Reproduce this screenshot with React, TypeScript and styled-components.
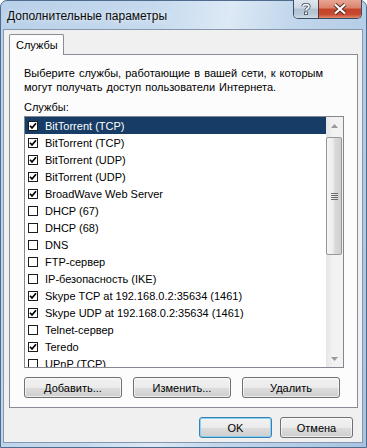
import styled, { createGlobalStyle } from "styled-components";

const GlobalStyle = createGlobalStyle`
  html, body {
    margin: 0;
    padding: 0;
    background: #ffffff;
  }
  body {
    font-family: "Liberation Sans", Arial, sans-serif;
    font-size: 11px;
    color: #000;
  }
`;

const Window = styled.div`
  width: 367px;
  height: 448px;
  box-sizing: border-box;
  border: 1px solid #4f6c8f;
  border-radius: 7px 7px 0 0;
  padding: 0 3px 4px 2px;
  display: flex;
  flex-direction: column;
  background: linear-gradient(
    100deg,
    #b8d0e9 0%,
    #c6daee 35%,
    #dde9f5 52%,
    #c2d7ec 66%,
    #a8c3e1 100%
  );
`;

const TitleBar = styled.div`
  height: 28px;
  flex: none;
  display: flex;
  justify-content: space-between;
  align-items: flex-start;
`;

const Title = styled.div`
  font-family: "Liberation Sans", Arial, sans-serif;
  font-size: 12px;
  line-height: 12px;
  padding: 9px 0 0 4px;
  color: #0b0b0b;
  text-shadow: 0 0 6px rgba(255, 255, 255, 0.9);
`;

const CaptionButtons = styled.div`
  display: flex;
  margin-right: 1px;
  margin-top: -1px;
  border: 1px solid #3a4d66;
  border-top: none;
  border-radius: 0 0 5px 5px;
  overflow: hidden;
`;

const CaptionButton = styled.div<{ $close?: boolean }>`
  width: ${(p) => (p.$close ? 42 : 24)}px;
  height: 18px;
  display: flex;
  align-items: center;
  justify-content: center;
  border-left: ${(p) => (p.$close ? "1px solid #5a3a3a" : "none")};
  background: ${(p) =>
    p.$close
      ? "linear-gradient(180deg, #e9a594 0%, #d9826b 45%, #c4432a 50%, #c84a30 80%, #e08a6c 100%)"
      : "linear-gradient(180deg, #dfe7ef 0%, #ccd8e4 45%, #b2c2d3 50%, #b9c9d8 80%, #d0dde8 100%)"};
`;

const Client = styled.div`
  flex: 1;
  box-sizing: border-box;
  border: 1px solid #8497ad;
  background: #f0f0f0;
  padding: 4px 4px 0 5px;
  display: flex;
  flex-direction: column;
`;

const TabStrip = styled.div`
  display: flex;
  height: 20px;
  position: relative;
  z-index: 1;
`;

const Tab = styled.div`
  width: 55px;
  height: 21px;
  box-sizing: border-box;
  border: 1px solid #898c95;
  border-bottom: none;
  border-radius: 2px 2px 0 0;
  background: #fcfcfc;
  padding: 4px 0 0 6px;
  line-height: 13px;
`;

const Panel = styled.div`
  height: 354px;
  box-sizing: border-box;
  border: 1px solid #898c95;
  background: #fcfcfc;
  padding: 11px 13px 0 14px;
  display: flex;
  flex-direction: column;
`;

const Intro = styled.div`
  line-height: 14px;
  word-spacing: 1px;
`;

const ListLabel = styled.div`
  line-height: 14px;
  margin-top: 6px;
`;

const ListBox = styled.div`
  margin-top: 2px;
  height: 252px;
  box-sizing: border-box;
  border: 1px solid #828790;
  background: #fff;
  display: flex;
  overflow: hidden;
`;

const Rows = styled.div`
  flex: 1;
  overflow: hidden;
`;

const Row = styled.div<{ $selected?: boolean }>`
  height: 17px;
  display: flex;
  align-items: center;
  padding-left: 3px;
  gap: 7px;
  white-space: nowrap;
  background: ${(p) => (p.$selected ? "#173d66" : "transparent")};
  color: ${(p) => (p.$selected ? "#fff" : "#000")};
`;

const Check = styled.div`
  width: 10px;
  height: 10px;
  box-sizing: border-box;
  border: 1px solid #1c1c1c;
  background: #fff;
  flex: none;
  display: flex;
  align-items: center;
  justify-content: center;
`;

const ScrollBar = styled.div`
  width: 17px;
  flex: none;
  display: flex;
  flex-direction: column;
  background: linear-gradient(90deg, #e6e6e6 0%, #f2f2f2 40%, #f2f2f2 100%);
`;

const ArrowButton = styled.div`
  height: 17px;
  display: flex;
  align-items: center;
  justify-content: center;
  flex: none;
`;

const Track = styled.div`
  flex: 1;
  padding: 3px 0 0 0;
`;

const Thumb = styled.div`
  height: 118px;
  box-sizing: border-box;
  border: 1px solid #979797;
  border-radius: 2px;
  margin-right: 1px;
  background: linear-gradient(90deg, #f4f4f4 0%, #ececec 45%, #dadada 55%, #d0d0d0 100%);
  display: flex;
  align-items: center;
  justify-content: center;
`;

const ButtonRow = styled.div<{ $end?: boolean }>`
  display: flex;
  gap: ${(p) => (p.$end ? 8 : 11)}px;
  justify-content: ${(p) => (p.$end ? "flex-end" : "flex-start")};
  margin-top: 9px;
  padding-right: ${(p) => (p.$end ? 5 : 0)}px;
`;

const Button = styled.div<{ $width: number; $default?: boolean }>`
  width: ${(p) => p.$width}px;
  height: 21px;
  box-sizing: border-box;
  border: 1px solid ${(p) => (p.$default ? "#3c7fb1" : "#707070")};
  border-radius: 3px;
  display: flex;
  align-items: center;
  justify-content: center;
  background: linear-gradient(180deg, #f2f2f2 0%, #ebebeb 50%, #dddddd 51%, #cfcfcf 100%);
  box-shadow: inset 0 0 0 1px
    ${(p) => (p.$default ? "rgba(120, 210, 245, 0.9)" : "rgba(255, 255, 255, 0.6)")};
`;

const services = [
  { name: "BitTorrent (TCP)", on: true },
  { name: "BitTorrent (TCP)", on: true },
  { name: "BitTorrent (UDP)", on: true },
  { name: "BitTorrent (UDP)", on: true },
  { name: "BroadWave Web Server", on: true },
  { name: "DHCP (67)", on: false },
  { name: "DHCP (68)", on: false },
  { name: "DNS", on: false },
  { name: "FTP-сервер", on: false },
  { name: "IP-безопасность (IKE)", on: false },
  { name: "Skype TCP at 192.168.0.2:35634 (1461)", on: true },
  { name: "Skype UDP at 192.168.0.2:35634 (1461)", on: true },
  { name: "Telnet-сервер", on: false },
  { name: "Teredo", on: true },
  { name: "UPnP (TCP)", on: false },
];

function CheckMark() {
  return (
    <svg width="8" height="8" viewBox="0 0 8 8">
      <path d="M1 3.8 L3 6 L7 1.2" fill="none" stroke="#000" strokeWidth="1.7" />
    </svg>
  );
}

function App() {
  return (
    <>
      <GlobalStyle />
      <Window>
        <TitleBar>
          <Title>Дополнительные параметры</Title>
          <CaptionButtons>
            <CaptionButton>
              <svg width="10" height="12" viewBox="0 0 10 12">
                <path
                  d="M2 3.5 C2 1 8 1 8 3.5 C8 5.5 5 5.5 5 7.5"
                  fill="none"
                  stroke="#3b4a5c"
                  strokeWidth="3.2"
                />
                <path
                  d="M2 3.5 C2 1 8 1 8 3.5 C8 5.5 5 5.5 5 7.5"
                  fill="none"
                  stroke="#fff"
                  strokeWidth="1.6"
                />
                <rect x="3.5" y="9" width="3" height="2.6" fill="#fff" stroke="#3b4a5c" strokeWidth="0.8" />
              </svg>
            </CaptionButton>
            <CaptionButton $close>
              <svg width="16" height="12" viewBox="0 0 16 12">
                <path d="M3 1.5 L13 10.5 M13 1.5 L3 10.5" stroke="#5a2a22" strokeWidth="4" />
                <path d="M3 1.5 L13 10.5 M13 1.5 L3 10.5" stroke="#fff" strokeWidth="2.2" />
              </svg>
            </CaptionButton>
          </CaptionButtons>
        </TitleBar>
        <Client>
          <TabStrip>
            <Tab>Службы</Tab>
          </TabStrip>
          <Panel>
            <Intro>
              Выберите службы, работающие в вашей сети, к которым
              <br />
              могут получать доступ пользователи Интернета.
            </Intro>
            <ListLabel>Службы:</ListLabel>
            <ListBox>
              <Rows>
                {services.map((s, i) => (
                  <Row key={i} $selected={i === 0}>
                    <Check>{s.on && <CheckMark />}</Check>
                    {s.name}
                  </Row>
                ))}
              </Rows>
              <ScrollBar>
                <ArrowButton>
                  <svg width="7" height="4" viewBox="0 0 7 4">
                    <path d="M0 4 L3.5 0 L7 4 Z" fill="#9a9a9a" />
                  </svg>
                </ArrowButton>
                <Track>
                  <Thumb>
                    <svg width="7" height="7" viewBox="0 0 7 7">
                      <path d="M0 0.5 H7 M0 2.5 H7 M0 4.5 H7 M0 6.5 H7" stroke="#6e6e6e" strokeWidth="1" />
                    </svg>
                  </Thumb>
                </Track>
                <ArrowButton>
                  <svg width="7" height="4" viewBox="0 0 7 4">
                    <path d="M0 0 L3.5 4 L7 0 Z" fill="#9a9a9a" />
                  </svg>
                </ArrowButton>
              </ScrollBar>
            </ListBox>
            <ButtonRow>
              <Button $width={98}>Добавить...</Button>
              <Button $width={98}>Изменить...</Button>
              <Button $width={98}>Удалить</Button>
            </ButtonRow>
          </Panel>
          <ButtonRow $end>
            <Button $width={73} $default>
              OK
            </Button>
            <Button $width={73}>Отмена</Button>
          </ButtonRow>
        </Client>
      </Window>
    </>
  );
}

export default App;
